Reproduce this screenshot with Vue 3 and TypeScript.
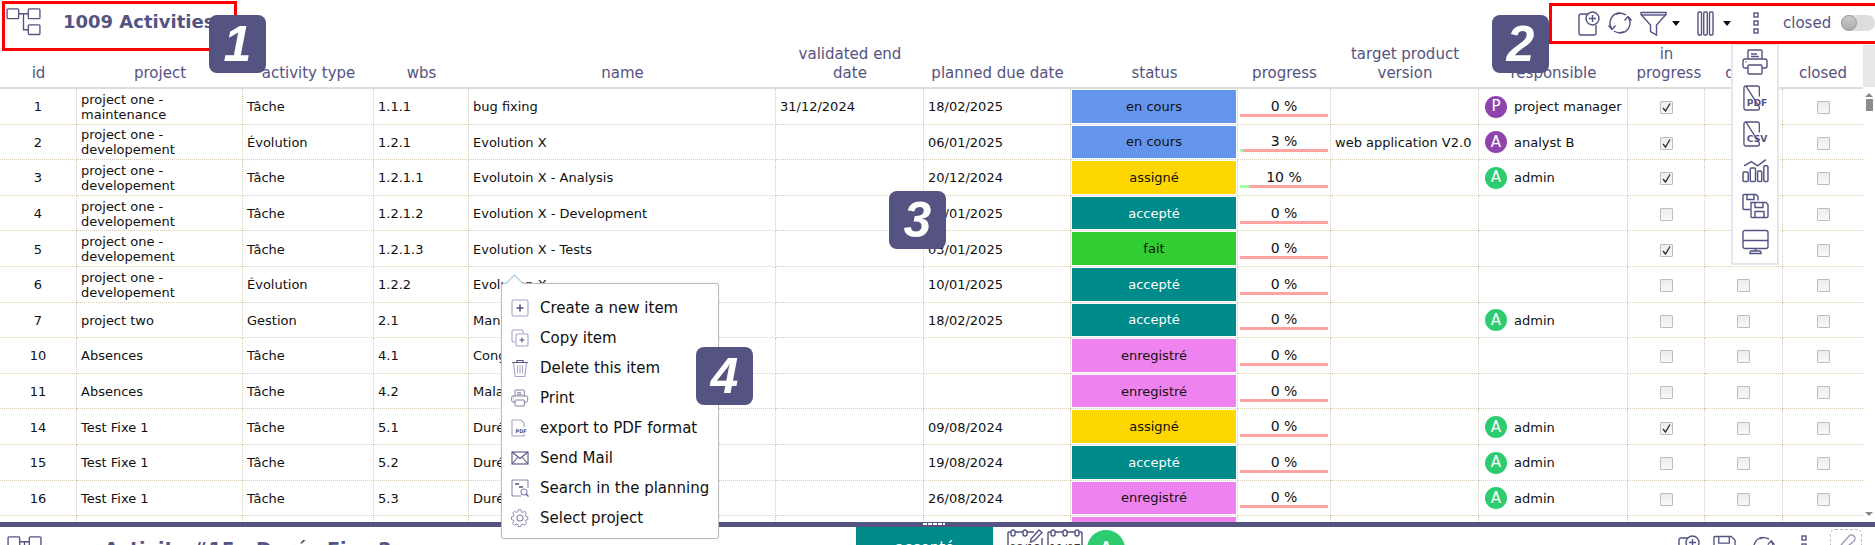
<script setup lang="ts">
interface Row {
  id: number
  project: string
  type: string
  wbs: string
  name: string
  validated?: string
  due?: string
  status: string
  progress: number
  version?: string
  person?: string
  initial?: string
  tone?: 'purple' | 'green'
  inProgress?: boolean
}

const columns = [
  { label: 'id', width: 77 },
  { label: 'project', width: 166 },
  { label: 'activity type', width: 131 },
  { label: 'wbs', width: 95 },
  { label: 'name', width: 307 },
  { label: 'validated end date', width: 148 },
  { label: 'planned due date', width: 147 },
  { label: 'status', width: 167 },
  { label: 'progress', width: 93 },
  { label: 'target product version', width: 148 },
  { label: 'responsible', width: 149 },
  { label: 'in progress', width: 77 },
  { label: 'done', width: 78 },
  { label: 'closed', width: 80 },
]

const dev = 'project one - developement'
const admin = { person: 'admin', initial: 'A', tone: 'green' as const }

const rows: Row[] = [
  { id: 1, project: 'project one - maintenance', type: 'Tâche', wbs: '1.1.1', name: 'bug fixing', validated: '31/12/2024', due: '18/02/2025', status: 'en cours', progress: 0, person: 'project manager', initial: 'P', tone: 'purple', inProgress: true },
  { id: 2, project: dev, type: 'Évolution', wbs: '1.2.1', name: 'Evolution X', due: '06/01/2025', status: 'en cours', progress: 3, version: 'web application V2.0', person: 'analyst B', initial: 'A', tone: 'purple', inProgress: true },
  { id: 3, project: dev, type: 'Tâche', wbs: '1.2.1.1', name: 'Evolutoin X - Analysis', due: '20/12/2024', status: 'assigné', progress: 10, ...admin, inProgress: true },
  { id: 4, project: dev, type: 'Tâche', wbs: '1.2.1.2', name: 'Evolution X - Development', due: '24/01/2025', status: 'accepté', progress: 0 },
  { id: 5, project: dev, type: 'Tâche', wbs: '1.2.1.3', name: 'Evolution X - Tests', due: '03/01/2025', status: 'fait', progress: 0, inProgress: true },
  { id: 6, project: dev, type: 'Évolution', wbs: '1.2.2', name: 'Evolution X', due: '10/01/2025', status: 'accepté', progress: 0 },
  { id: 7, project: 'project two', type: 'Gestion', wbs: '2.1', name: 'Management', due: '18/02/2025', status: 'accepté', progress: 0, ...admin },
  { id: 10, project: 'Absences', type: 'Tâche', wbs: '4.1', name: 'Congés', status: 'enregistré', progress: 0 },
  { id: 11, project: 'Absences', type: 'Tâche', wbs: '4.2', name: 'Maladie', status: 'enregistré', progress: 0 },
  { id: 14, project: 'Test Fixe 1', type: 'Tâche', wbs: '5.1', name: 'Durée Fixe 1', due: '09/08/2024', status: 'assigné', progress: 0, ...admin, inProgress: true },
  { id: 15, project: 'Test Fixe 1', type: 'Tâche', wbs: '5.2', name: 'Durée Fixe 2', due: '19/08/2024', status: 'accepté', progress: 0, ...admin },
  { id: 16, project: 'Test Fixe 1', type: 'Tâche', wbs: '5.3', name: 'Durée Fixe 3', due: '26/08/2024', status: 'enregistré', progress: 0, ...admin },
]

const statusClass: Record<string, string> = {
  'en cours': 'st-blue',
  'assigné': 'st-gold',
  'accepté': 'st-teal',
  'fait': 'st-lime',
  'enregistré': 'st-violet',
}

const exportIcons = ['i-printer', 'i-pdf', 'i-csv', 'i-chart', 'i-saves', 'i-monitor']

const menu = [
  { label: 'Create a new item', icon: 'm-plus' },
  { label: 'Copy item', icon: 'm-copy' },
  { label: 'Delete this item', icon: 'm-trash' },
  { label: 'Print', icon: 'i-printer' },
  { label: 'export to PDF format', icon: 'm-pdf' },
  { label: 'Send Mail', icon: 'm-mail' },
  { label: 'Search in the planning', icon: 'm-search' },
  { label: 'Select project', icon: 'm-gear' },
]
</script>

<template>
  <div class="page">
    <svg class="sprite" aria-hidden="true">
      <symbol id="i-tree" viewBox="0 0 36 30">
        <rect x="1" y="2" width="12" height="10" rx="1" />
        <rect x="23" y="2" width="12" height="10" rx="1" />
        <rect x="23" y="18.500" width="12" height="10" rx="1" />
        <path d="M13 7h10M18 7v16.500h5" />
      </symbol>
      <symbol id="i-add" viewBox="0 0 22 25">
        <path d="M10 3H3a2 2 0 0 0-2 2v17a2 2 0 0 0 2 2h13a2 2 0 0 0 2-2v-8" />
        <circle cx="14.500" cy="7.500" r="6.500" fill="#fff" />
        <path d="M14.500 4v7M11 7.500h7" />
      </symbol>
      <symbol id="i-refresh" viewBox="0 0 26 24">
        <path d="M13 2A10 10 0 0 0 5 18" />
        <path d="M13 22A10 10 0 0 0 21 6" />
        <path d="M1.500 14.500L5 18.500l3.500-4M17.500 9.500L21 5.500l3.500 4" />
        <path d="M9 3.500A10 10 0 0 1 19 4M17 20.500A10 10 0 0 1 7 20" />
      </symbol>
      <symbol id="i-filter" viewBox="0 0 27 25">
        <path d="M1 1.500h25v2L16.500 14v10l-6-3.500V14L1 3.500z" />
        <path d="M1 4h25" />
      </symbol>
      <symbol id="i-columns" viewBox="0 0 17 25">
        <rect x="1" y="1" width="3.500" height="23" rx="1" />
        <rect x="6.750" y="1" width="3.500" height="23" rx="1" />
        <rect x="12.500" y="1" width="3.500" height="23" rx="1" />
      </symbol>
      <symbol id="i-dots" viewBox="0 0 6 22">
        <rect x="1" y="1" width="4" height="4" />
        <rect x="1" y="9" width="4" height="4" />
        <rect x="1" y="17" width="4" height="4" />
      </symbol>
      <symbol id="i-printer" viewBox="0 0 27 26">
        <path d="M6 10V2a1 1 0 0 1 1-1h12a1 1 0 0 1 1 1v8" />
        <path d="M6 19H3a2 2 0 0 1-2-2v-5a2 2 0 0 1 2-2h20a2 2 0 0 1 2 2v5a2 2 0 0 1-2 2h-3" />
        <rect x="6" y="16" width="14" height="9" rx="1" />
        <path d="M9 5h6M9 7.500h8M3.500 13h1" />
      </symbol>
      <symbol id="i-pdf" viewBox="0 0 26 27">
        <path d="M3 1h12a2 2 0 0 1 2 2v9M17 23v1a2 2 0 0 1-2 2H3a2 2 0 0 1-2-2V3a2 2 0 0 1 2-2z" />
        <text x="4" y="21.500" class="doc-label">PDF</text>
      </symbol>
      <symbol id="i-csv" viewBox="0 0 26 27">
        <path d="M3 1h12a2 2 0 0 1 2 2v9M17 23v1a2 2 0 0 1-2 2H3a2 2 0 0 1-2-2V3a2 2 0 0 1 2-2z" />
        <text x="4" y="21.500" class="doc-label">CSV</text>
      </symbol>
      <symbol id="i-chart" viewBox="0 0 26 24">
        <rect x="1" y="14" width="5" height="9" rx="1" />
        <rect x="8" y="10" width="5" height="13" rx="1" />
        <rect x="15" y="13" width="4" height="10" rx="1" />
        <rect x="21" y="8" width="4" height="15" rx="1" />
        <path d="M2 8l7-4 6 4 8-6" />
      </symbol>
      <symbol id="i-saves" viewBox="0 0 27 25">
        <path d="M8 16H2a1 1 0 0 1-1-1V2a1 1 0 0 1 1-1h12l2 2v4" />
        <path d="M5 1v5h7V1" />
        <path d="M9 9h15l2 2v12a1 1 0 0 1-1 1H10a1 1 0 0 1-1-1z" />
        <path d="M13 9v5h8V9M13 24v-6h9v6" />
      </symbol>
      <symbol id="i-monitor" viewBox="0 0 27 25">
        <rect x="1" y="1" width="25" height="18" rx="2" />
        <path d="M1 11h25M13.500 19v3M8 24h11v-1a1.500 1.500 0 0 0-1.500-1.500h-8A1.500 1.500 0 0 0 8 23z" />
      </symbol>
      <symbol id="m-plus" viewBox="0 0 18 18">
        <rect x="1" y="1" width="16" height="16" rx="1.500" stroke="#a5a4c6" />
        <path d="M9 5.500v7M5.500 9h7" stroke-width="1.600" />
      </symbol>
      <symbol id="m-copy" viewBox="0 0 18 18">
        <path d="M4 13H2a1 1 0 0 1-1-1V2a1 1 0 0 1 1-1h9a1 1 0 0 1 1 1v2" stroke="#a5a4c6" />
        <rect x="5" y="5" width="12" height="12" rx="1" stroke="#a5a4c6" />
        <path d="M11 8.500v5M8.500 11h5" />
      </symbol>
      <symbol id="m-trash" viewBox="0 0 18 18">
        <path d="M1 3.500h16M6 3.500V1.500h6v2" />
        <path d="M2.500 3.500l1.500 13a1 1 0 0 0 1 1h8a1 1 0 0 0 1-1l1.500-13M6.500 6.500v8M9 6.500v8M11.500 6.500v8" stroke="#a5a4c6" />
      </symbol>
      <symbol id="m-pdf" viewBox="0 0 18 18">
        <path d="M1 1h9l3 3v4M13 15v2H1V1" stroke="#a5a4c6" />
        <text x="4.500" y="13.500" class="doc-label-sm">PDF</text>
      </symbol>
      <symbol id="m-mail" viewBox="0 0 18 14">
        <rect x="1" y="1" width="16" height="12" />
        <path d="M1 1l8 6.500L17 1M1 13l5.500-6.500M17 13l-5.500-6.500" />
      </symbol>
      <symbol id="m-search" viewBox="0 0 18 18">
        <path d="M17 9V2a1 1 0 0 0-1-1H2a1 1 0 0 0-1 1v14a1 1 0 0 0 1 1h8" stroke="#8786b0" />
        <path d="M4 5h4M8 8h4" stroke-width="1.600" />
        <circle cx="13" cy="13" r="3" stroke="#8786b0" />
        <path d="M15 15l2.500 2.500" />
      </symbol>
      <symbol id="m-gear" viewBox="0 0 18 18">
        <path stroke="#8786b0" d="M7.500 1h3l.5 2.300 1.700.7 2-1.300 2 2.100-1.300 2 .7 1.700 2.100.5v3l-2.100.5-.7 1.700 1.300 2-2 2-2-1.300-1.700.7-.5 2.100h-3l-.5-2.100-1.700-.7-2 1.300-2-2 1.300-2-.7-1.700L0 12V9l2.100-.5.7-1.700-1.300-2 2-2.100 2 1.300L7 3.300z" transform="scale(.9) translate(.5 -.2)" />
        <circle cx="9" cy="9" r="3" stroke="#8786b0" />
      </symbol>
      <symbol id="i-cal-edit" viewBox="0 0 36 24">
        <path d="M27 3H2a1 1 0 0 0-1 1v20M35 9v15" />
        <rect x="4" y="1" width="4" height="6" rx="2" fill="#fff" />
        <rect x="16" y="1" width="4" height="6" rx="2" fill="#fff" />
        <path d="M24 10L32 1l3 2.500L27 12l-3.500 1z" />
      </symbol>
      <symbol id="i-cal" viewBox="0 0 36 24">
        <path d="M2 3h32a1 1 0 0 1 1 1v20M1 24V4a1 1 0 0 1 1-1" />
        <rect x="4" y="1" width="4" height="6" rx="2" fill="#fff" />
        <rect x="16" y="1" width="4" height="6" rx="2" fill="#fff" />
        <rect x="28" y="1" width="4" height="6" rx="2" fill="#fff" />
      </symbol>
      <symbol id="i-save" viewBox="0 0 24 24">
        <path d="M1 2a1 1 0 0 1 1-1h17l4 4v18H1z" />
        <path d="M6 1v7h11V1" />
      </symbol>
      <symbol id="i-pen" viewBox="0 0 24 18">
        <path d="M2 18L15 3a3.500 3.500 0 0 1 5 5L8 18" />
      </symbol>
      <symbol id="i-check" viewBox="0 0 13 13">
        <path d="M3 7l2.500 3L10 2.500" />
      </symbol>
    </svg>

    <header class="topbar">
      <div class="topbar-left">
        <svg class="icon tree"><use href="#i-tree" /></svg>
        <span class="title">1009 Activities</span>
      </div>
      <div class="tools">
        <svg class="icon tool-add"><use href="#i-add" /></svg>
        <svg class="icon tool-refresh"><use href="#i-refresh" /></svg>
        <svg class="icon tool-filter"><use href="#i-filter" /></svg>
        <span class="caret caret-filter"></span>
        <svg class="icon tool-columns"><use href="#i-columns" /></svg>
        <span class="caret caret-columns"></span>
        <svg class="icon tool-dots"><use href="#i-dots" /></svg>
        <span class="closed-label">closed</span>
        <span class="toggle"><span class="knob"></span></span>
      </div>
    </header>

    <div class="grid-wrap">
      <table class="grid">
        <colgroup>
          <col v-for="col in columns" :key="col.label" :style="{ width: col.width + 'px' }" />
        </colgroup>
        <thead>
          <tr>
            <th v-for="col in columns" :key="col.label">
              <span class="th-label" :class="{ narrow: col.label === 'in progress', wrap: col.label === 'validated end date' }">{{ col.label }}</span>
            </th>
          </tr>
        </thead>
        <tbody>
          <tr v-for="row in rows" :key="row.id">
            <td class="center">{{ row.id }}</td>
            <td class="project">{{ row.project }}</td>
            <td>{{ row.type }}</td>
            <td>{{ row.wbs }}</td>
            <td>{{ row.name }}</td>
            <td>{{ row.validated }}</td>
            <td>{{ row.due }}</td>
            <td class="status-cell">
              <div class="status" :class="statusClass[row.status]">{{ row.status }}</div>
            </td>
            <td class="progress-cell">
              <div class="progress">
                <span class="progress-text">{{ row.progress }} %</span>
                <div class="bar"><div class="bar-fill" :style="{ width: row.progress + '%' }"></div></div>
              </div>
            </td>
            <td class="version">{{ row.version }}</td>
            <td>
              <div v-if="row.person" class="person">
                <span class="avatar" :class="row.tone">{{ row.initial }}</span>
                <span>{{ row.person }}</span>
              </div>
            </td>
            <td class="center">
              <span class="check">
                <svg v-if="row.inProgress" class="check-mark"><use href="#i-check" /></svg>
              </span>
            </td>
            <td class="center"><span class="check"></span></td>
            <td class="center"><span class="check"></span></td>
          </tr>
          <tr>
            <td v-for="n in 7" :key="n"></td>
            <td class="status-cell"><div class="status st-violet"></div></td>
            <td v-for="n in 6" :key="'e' + n"></td>
          </tr>
        </tbody>
      </table>
      <div class="scrollbar">
        <div class="scroll-head"></div>
        <span class="arrow-up"></span>
        <span class="thumb"></span>
        <span class="arrow-down"></span>
      </div>
    </div>

    <div class="splitter"><span class="grip"></span></div>

    <footer class="detail">
      <div class="detail-left">
        <svg class="icon tree"><use href="#i-tree" /></svg>
        <span class="detail-title">Activity #15 - Durée Fixe 2</span>
      </div>
      <div class="detail-status">accepté</div>
      <div class="cal cal-first">
        <svg class="icon cal-icon"><use href="#i-cal-edit" /></svg>
        <span class="cal-date">08/12</span>
      </div>
      <div class="cal">
        <svg class="icon cal-icon"><use href="#i-cal" /></svg>
        <span class="cal-date">11/07</span>
      </div>
      <span class="avatar green detail-avatar">A</span>
      <div class="detail-tools">
        <svg class="icon detail-add"><use href="#i-add" /></svg>
        <svg class="icon detail-save"><use href="#i-save" /></svg>
        <svg class="icon detail-refresh"><use href="#i-refresh" /></svg>
        <svg class="icon detail-dots"><use href="#i-dots" /></svg>
        <span class="attach"><svg class="icon pen"><use href="#i-pen" /></svg></span>
      </div>
    </footer>

    <!-- export menu opened from the toolbar -->
    <div class="export-menu">
      <svg v-for="icon in exportIcons" :key="icon" class="icon export-icon"><use :href="'#' + icon" /></svg>
    </div>

    <!-- row context menu -->
    <div class="context-menu">
      <span class="context-arrow"></span>
      <div v-for="item in menu" :key="item.label" class="context-item">
        <svg class="icon context-icon"><use :href="'#' + item.icon" /></svg>
        <span>{{ item.label }}</span>
      </div>
    </div>

    <!-- annotations -->
    <div class="frame frame-one"></div>
    <div class="frame frame-two"></div>
    <div class="badge badge-one">1</div>
    <div class="badge badge-two">2</div>
    <div class="badge badge-three">3</div>
    <div class="badge badge-four">4</div>
  </div>
</template>

<style scoped>
.page {
  position: relative;
  display: flex;
  flex-direction: column;
  width: 1875px;
  height: 545px;
  overflow: hidden;
  background: #fff;
  color: #111;
  font-family: 'DejaVu Sans', Verdana, sans-serif;
  font-size: 13px;
}

.sprite {
  display: none;
}

.icon {
  display: block;
  flex: none;
  fill: none;
  stroke: #545381;
  stroke-width: 1.4;
}

.doc-label {
  fill: #545381;
  stroke: none;
  font: bold 9.500px 'DejaVu Sans', sans-serif;
}

.doc-label-sm {
  fill: #545381;
  stroke: none;
  font: bold 5px 'DejaVu Sans', sans-serif;
}

.topbar {
  display: flex;
  flex: none;
  justify-content: space-between;
  height: 45px;
}

.topbar-left {
  display: flex;
  align-items: center;
  height: 42px;
  padding-left: 6px;
}

.tree {
  width: 35px;
  height: 29px;
}

.title {
  margin-left: 22px;
  color: #545381;
  font-size: 18px;
  font-weight: 700;
}

.tools {
  display: flex;
  align-items: center;
  height: 46px;
  width: 297px;
}

.tool-add {
  width: 22px;
  height: 25px;
}

.tool-refresh {
  width: 26px;
  height: 24px;
  margin-left: 7px;
}

.tool-filter {
  width: 27px;
  height: 25px;
  margin-left: 7px;
}

.caret {
  width: 0;
  height: 0;
  border-left: 4px solid transparent;
  border-right: 4px solid transparent;
  border-top: 5px solid #111;
}

.caret-filter {
  margin-left: 5px;
}

.tool-columns {
  width: 17px;
  height: 25px;
  margin-left: 17px;
}

.caret-columns {
  margin-left: 9px;
}

.tool-dots {
  width: 6px;
  height: 22px;
  margin-left: 22px;
}

.closed-label {
  margin-left: 24px;
  color: #545381;
  font-size: 15px;
}

.toggle {
  position: relative;
  width: 35px;
  height: 16px;
  margin-left: 10px;
  border-radius: 8px;
  background: #ddd;
}

.knob {
  position: absolute;
  top: 0;
  left: 0;
  width: 16px;
  height: 16px;
  box-sizing: border-box;
  border: 1px solid #999;
  border-radius: 50%;
  background: linear-gradient(#ccc, #aaa);
}

.grid-wrap {
  display: flex;
  flex: none;
  height: 477px;
  overflow: hidden;
}

.grid {
  width: 1863px;
  flex: none;
  table-layout: fixed;
  border-collapse: separate;
  border-spacing: 0;
}

th {
  height: 42px;
  padding: 0 2px 4px;
  box-sizing: border-box;
  border-bottom: 2px solid #ddd;
  color: #545381;
  font-size: 15px;
  font-weight: 400;
  line-height: 19px;
  text-align: center;
  vertical-align: bottom;
}

.th-label {
  display: block;
}

.th-label.narrow {
  width: 60px;
  margin: 0 auto;
}

.th-label.wrap {
  width: 120px;
  margin: 0 auto;
}

td {
  height: 35.6px;
  padding: 1px 4px 0;
  box-sizing: border-box;
  overflow: hidden;
  border-right: 1px dotted #d8ceb6;
  border-bottom: 1px dotted #d8ceb6;
  line-height: 15px;
  white-space: nowrap;
}

td:last-child {
  border-right: 0;
}

td.center {
  text-align: center;
}

td.project {
  white-space: normal;
}

td.version {
  padding-right: 0;
}

td.status-cell {
  padding: 0;
}

.status {
  display: flex;
  align-items: center;
  justify-content: center;
  height: 32.6px;
  margin: 1px;
}

.st-blue {
  background: #6495ed;
}

.st-gold {
  background: #ffd700;
}

.st-teal {
  background: #008b8b;
  color: #fff;
}

.st-lime {
  background: #32cd32;
}

.st-violet {
  background: #ee82ee;
}

td.progress-cell {
  padding: 0 2px;
}

.progress {
  display: flex;
  flex-direction: column;
  align-items: center;
  padding-top: 2px;
}

.progress-text {
  font-size: 14px;
  line-height: 17px;
}

.bar {
  align-self: stretch;
  height: 3px;
  margin-top: -1px;
  background: #ffa3a3;
}

.bar-fill {
  height: 100%;
  background: #a3ffa3;
}

.person {
  display: flex;
  align-items: center;
  gap: 7px;
  margin-left: 2px;
}

.avatar {
  display: flex;
  flex: none;
  align-items: center;
  justify-content: center;
  width: 22px;
  height: 22px;
  border-radius: 50%;
  color: #fff;
  font-size: 15px;
}

.avatar.purple {
  background: #8e44ad;
}

.avatar.green {
  background: #2ecc71;
}

.check {
  position: relative;
  display: inline-block;
  width: 13px;
  height: 13px;
  box-sizing: border-box;
  border: 1px solid #bdbdbd;
  border-radius: 1px;
  background: linear-gradient(#ececec, #f8f8f8);
  vertical-align: middle;
}

.check-mark {
  position: absolute;
  top: -1px;
  left: -1px;
  width: 13px;
  height: 13px;
  fill: none;
  stroke: #333;
  stroke-width: 1.4;
}

.scrollbar {
  display: flex;
  flex: 1;
  flex-direction: column;
  align-items: center;
  padding-bottom: 6px;
}

.scroll-head {
  flex: none;
  align-self: stretch;
  height: 42px;
  background: #e8e8e8;
}

.arrow-up {
  margin-top: 6px;
  border-left: 4px solid transparent;
  border-right: 4px solid transparent;
  border-bottom: 4px solid #888;
}

.thumb {
  width: 7px;
  height: 12px;
  margin-top: 2px;
  background: #8c8c8c;
}

.arrow-down {
  margin-top: auto;
  border-left: 4px solid transparent;
  border-right: 4px solid transparent;
  border-top: 4px solid #888;
}

.splitter {
  display: flex;
  flex: none;
  justify-content: center;
  height: 5px;
  background: #545381;
}

.grip {
  width: 22px;
  height: 2px;
  margin: 1px 0 0 -7px;
  background: repeating-linear-gradient(90deg, #fff 0 4px, transparent 4px 5px);
}

.detail {
  display: flex;
  flex: none;
  height: 40px;
}

.detail-left {
  display: flex;
  flex: 0 0 856px;
  padding: 8px 0 0 7px;
  box-sizing: border-box;
}

.detail-title {
  margin-left: 62px;
  color: #545381;
  font-size: 19px;
  font-weight: 700;
  line-height: 24px;
  padding-top: 2px;
}

.detail-status {
  flex: 0 0 137px;
  padding-top: 12px;
  background: #008b8b;
  color: #fff;
  font-size: 15px;
  text-align: center;
}

.cal {
  width: 36px;
  margin: 2px 0 0 4px;
}

.cal-first {
  margin-left: 14px;
}

.cal-icon {
  width: 36px;
  height: 24px;
}

.cal-date {
  display: block;
  margin-top: -11px;
  color: #333;
  font-size: 11px;
  line-height: 13px;
  text-align: center;
}

.detail-avatar {
  width: 38px;
  height: 38px;
  margin: 3px 0 0 4px;
  font-size: 22px;
}

.detail-tools {
  display: flex;
  margin-left: auto;
  padding: 8px 13px 0 0;
}

.detail-add {
  width: 22px;
  height: 25px;
}

.detail-save {
  width: 23px;
  height: 24px;
  margin-left: 13px;
}

.detail-refresh {
  width: 25px;
  height: 24px;
  margin-left: 15px;
}

.detail-dots {
  width: 6px;
  height: 22px;
  margin-left: 25px;
}

.attach {
  display: block;
  width: 32px;
  height: 30px;
  margin: -6px 0 0 23px;
  box-sizing: border-box;
  padding: 3px 3px;
  border: 1px dashed #bbb;
  border-radius: 5px;
}

.pen {
  width: 24px;
  height: 18px;
  stroke: #9b9ab8;
}

.export-menu {
  position: absolute;
  top: 43px;
  left: 1731px;
  display: flex;
  flex-direction: column;
  align-items: center;
  gap: 10px;
  width: 48px;
  height: 222px;
  box-sizing: border-box;
  padding-top: 4px;
  border: 2px solid #e6e6f0;
  background: #fff;
}

.export-icon {
  width: 27px;
  height: 26px;
}

.context-menu {
  position: absolute;
  top: 283px;
  left: 501px;
  width: 218px;
  height: 256px;
  box-sizing: border-box;
  padding-top: 9px;
  border: 1px solid #bbb;
  border-radius: 3px;
  background: #fff;
  box-shadow: 0 0 2px rgba(0, 0, 0, 0.1);
  font-size: 15px;
}

.context-arrow {
  position: absolute;
  top: -7px;
  left: 6px;
  width: 12px;
  height: 12px;
  border-top: 1px solid #a7c6da;
  border-left: 1px solid #a7c6da;
  background: #fff;
  transform: rotate(45deg);
}

.context-item {
  display: flex;
  align-items: center;
  height: 30px;
  padding-left: 9px;
}

.context-icon {
  width: 18px;
  height: 18px;
  margin-right: 11px;
  stroke: #545381;
  stroke-width: 1.1;
}

.frame {
  position: absolute;
  box-sizing: border-box;
  border: 3px solid #f00;
}

.frame-one {
  top: 1px;
  left: 2px;
  width: 235px;
  height: 50px;
}

.frame-two {
  top: 3px;
  left: 1549px;
  width: 340px;
  height: 41px;
}

.badge {
  position: absolute;
  display: flex;
  align-items: center;
  justify-content: center;
  width: 57px;
  height: 58px;
  border-radius: 8px;
  background: #545381;
  color: #fff;
  font-family: 'Liberation Sans', Arial, sans-serif;
  font-size: 50px;
  font-style: italic;
  font-weight: 700;
}

.badge-one {
  top: 15px;
  left: 209px;
}

.badge-two {
  top: 15px;
  left: 1492px;
}

.badge-three {
  top: 191px;
  left: 889px;
}

.badge-four {
  top: 347px;
  left: 696px;
}
</style>

<style>
html,
body {
  margin: 0;
  overflow: hidden;
}
</style>
